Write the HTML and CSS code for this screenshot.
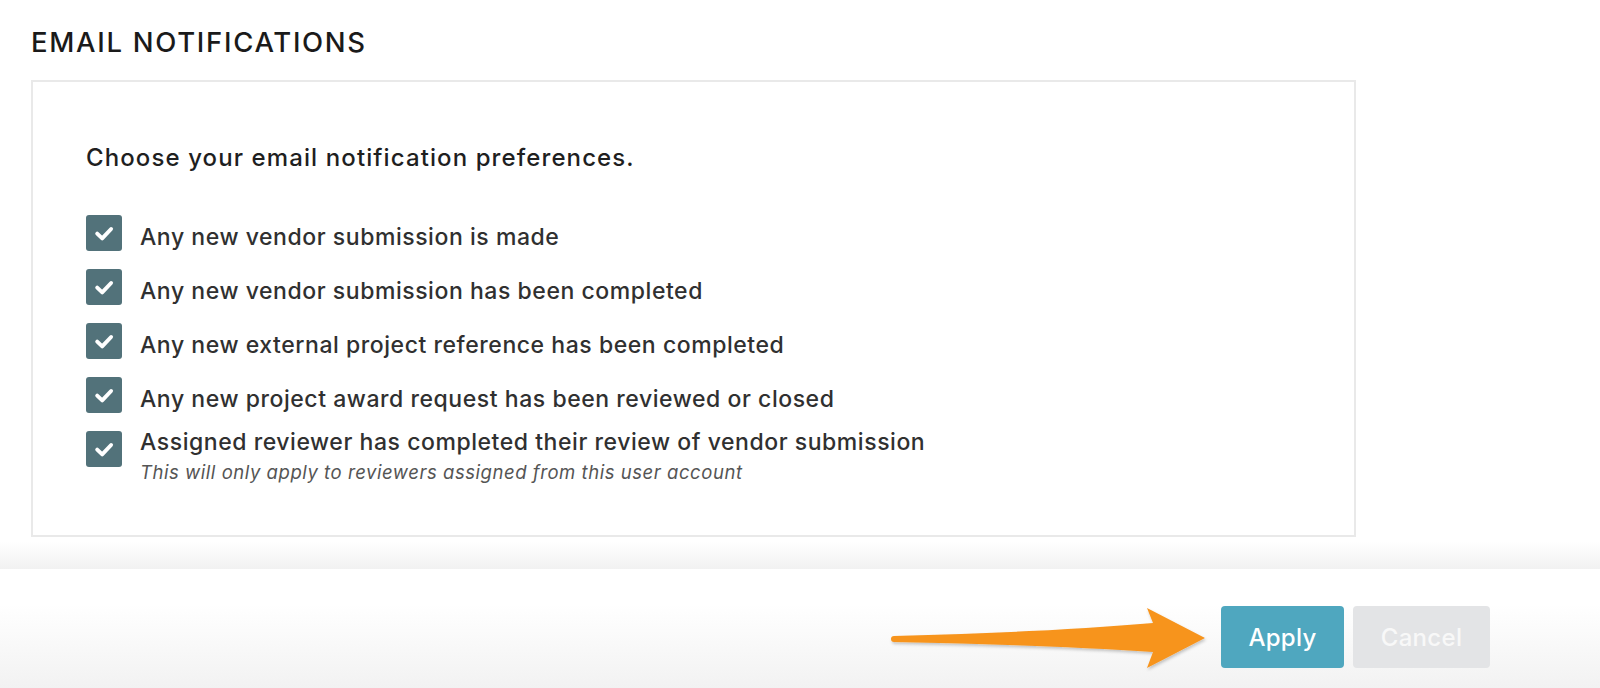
FILE: index.html
```html
<!DOCTYPE html>
<html lang="en">
<head>
<meta charset="utf-8">
<title>Email Notifications</title>
<link rel="stylesheet" href="styles.css">
</head>
<body>
<div class="page">
  <h1 class="title">EMAIL NOTIFICATIONS</h1>
  <section class="panel">
    <h2 class="lead">Choose your email notification preferences.</h2>
    <ul class="options">
      <li class="option">
        <span class="check"><svg viewBox="0 0 36 36" width="36" height="36"><path d="M11.2 18.6l5 4.8 8.9-9.4" fill="none" stroke="#fff" stroke-width="3.9" stroke-linecap="round" stroke-linejoin="round"/></svg></span>
        <span class="label">Any new vendor submission is made</span>
      </li>
      <li class="option">
        <span class="check"><svg viewBox="0 0 36 36" width="36" height="36"><path d="M11.2 18.6l5 4.8 8.9-9.4" fill="none" stroke="#fff" stroke-width="3.9" stroke-linecap="round" stroke-linejoin="round"/></svg></span>
        <span class="label">Any new vendor submission has been completed</span>
      </li>
      <li class="option">
        <span class="check"><svg viewBox="0 0 36 36" width="36" height="36"><path d="M11.2 18.6l5 4.8 8.9-9.4" fill="none" stroke="#fff" stroke-width="3.9" stroke-linecap="round" stroke-linejoin="round"/></svg></span>
        <span class="label">Any new external project reference has been completed</span>
      </li>
      <li class="option">
        <span class="check"><svg viewBox="0 0 36 36" width="36" height="36"><path d="M11.2 18.6l5 4.8 8.9-9.4" fill="none" stroke="#fff" stroke-width="3.9" stroke-linecap="round" stroke-linejoin="round"/></svg></span>
        <span class="label">Any new project award request has been reviewed or closed</span>
      </li>
      <li class="option">
        <span class="check"><svg viewBox="0 0 36 36" width="36" height="36"><path d="M11.2 18.6l5 4.8 8.9-9.4" fill="none" stroke="#fff" stroke-width="3.9" stroke-linecap="round" stroke-linejoin="round"/></svg></span>
        <span class="text">
          <span class="label">Assigned reviewer has completed their review of vendor submission</span>
          <span class="note">This will only apply to reviewers assigned from this user account</span>
        </span>
      </li>
    </ul>
  </section>
  <div class="fade"></div>
  <footer class="footer">
    <svg class="arrow" viewBox="0 0 340 119" width="340" height="119">
      <defs>
        <filter id="sh" x="-10%" y="-30%" width="120%" height="160%">
          <feDropShadow dx="1" dy="2" stdDeviation="1.5" flood-color="#000" flood-opacity="0.22"/>
        </filter>
      </defs>
      <path d="M14 67 Q170 63 273 54 L267 39 L325 69 L267 99 L273 83 Q170 76 14 73 A3 3 0 0 1 14 67 Z" fill="#f7941d" filter="url(#sh)"/>
    </svg>
    <button class="btn btn-apply" type="button">Apply</button>
    <button class="btn btn-cancel" type="button">Cancel</button>
  </footer>
</div>
</body>
</html>
```

FILE: styles.css
```css
* { box-sizing: border-box; }
html, body { margin: 0; padding: 0; background: #fff; }
body {
  font-family: "Inter", "Lato", sans-serif;
  color: #2b2b2b;
  width: 1600px;
  height: 688px;
  overflow: hidden;
}
.page { display: flex; flex-direction: column; height: 688px; }
.title {
  margin: 0;
  padding: 25px 0 0 31px;
  height: 80px;
  font-size: 27.5px;
  line-height: 34px;
  font-weight: 500;
  color: #1a1a1a;
  letter-spacing: 1.7px;
}
.panel {
  margin-left: 31px;
  width: 1325px;
  height: 457px;
  border: 2px solid #e9e9e9;
  padding: 61px 0 0 53px;
  flex: none;
}
.lead {
  margin: 0;
  font-size: 24px;
  line-height: 30px;
  font-weight: 500;
  color: #1f1f1f;
  letter-spacing: 1.1px;
}
.options { list-style: none; margin: 42px 0 0; padding: 0; display: flex; flex-direction: column; gap: 18px; }
.option { display: flex; align-items: flex-start; gap: 18px; }
.check {
  width: 36px; height: 36px; flex: none;
  background: #52727a;
  border-radius: 3px;
  display: flex;
}
.label {
  display: block;
  font-size: 23px;
  line-height: 36px;
  margin: 4px 0 -4px;
  font-weight: 500;
  letter-spacing: 0.55px;
  color: #303030;
}
.text { display: flex; flex-direction: column; }
.text .label { line-height: 30px; margin: -4px 0 0; }
.note {
  font-size: 18.5px;
  line-height: 26px;
  margin-top: 2px;
  font-style: italic;
  letter-spacing: 0.55px;
  color: #555;
}
.fade {
  height: 32px;
  flex: none;
  background: linear-gradient(to bottom, #fff 0%, #fff 15%, #f1f1f1 100%);
}
.footer {
  position: relative;
  height: 119px;
  flex: none;
  display: flex;
  justify-content: flex-end;
  align-items: flex-start;
  gap: 9px;
  padding: 37px 110px 0 0;
  background: linear-gradient(to bottom, #fff 0%, #fff 30%, #f2f2f2 100%);
}
.arrow { position: absolute; left: 880px; top: 0; }
.btn {
  font-family: inherit;
  border: none;
  height: 62px;
  border-radius: 4px;
  font-size: 24px;
  font-weight: 500;
  letter-spacing: 0.3px;
  color: #fff;
  padding: 0;
}
.btn-apply { width: 123px; background: #4fa7bf; }
.btn-cancel { width: 137px; background: #e3e4e6; color: #f8f8f8; }
```
